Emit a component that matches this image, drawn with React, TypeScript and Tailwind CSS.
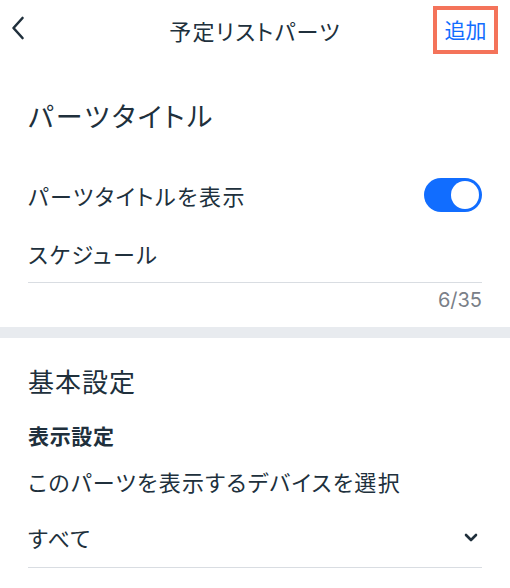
import React from "react";

const jp = {
  fontFamily: '"Noto Sans CJK JP", "Noto Sans", sans-serif',
  fontFeatureSettings: '"palt"',
} as React.CSSProperties;

export default function App() {
  return (
    <div className="w-[510px] h-[588px] bg-white text-[#20303c] overflow-hidden" style={jp}>
      {/* Header */}
      <div className="grid grid-cols-[1fr_auto_1fr] items-center h-[60px]">
        <div className="flex items-center pl-[11px] pb-[4px]">
          <svg width="14" height="24" viewBox="0 0 14 24" fill="none">
            <polyline points="11.5,2 2.5,12 11.5,22" stroke="#20303c" strokeWidth="2.6" strokeLinecap="round" strokeLinejoin="round" />
          </svg>
        </div>
        <div className="text-[22px] leading-[30px] tracking-[0.06em]">予定リストパーツ</div>
        <div className="flex justify-end pr-[12px]">
          <div className="w-[65px] h-[48px] border-[4px] border-[#f4735a] flex items-center justify-center text-[21px] text-[#116dff]">
            追加
          </div>
        </div>
      </div>

      {/* Section 1 */}
      <div className="px-[28px] pt-[20px]">
        <div className="h-[72px] flex items-center text-[27px] tracking-[0.09em]">パーツタイトル</div>
        <div className="h-[86px] flex items-center justify-between">
          <span className="text-[22px] tracking-[0.07em]">パーツタイトルを表示</span>
          <div className="w-[58px] h-[34px] rounded-full bg-[#116dff] flex items-center justify-end pr-[3px]">
            <div className="w-[28px] h-[28px] rounded-full bg-white" />
          </div>
        </div>
        <div className="h-[45px] border-b border-[#d9dde2]">
          <div className="text-[22px] leading-[30px] tracking-[0.07em]">スケジュール</div>
        </div>
        <div className="h-[34px] flex items-center justify-end text-[20px] text-[#7a8088]" style={{ fontFamily: 'Inter, "Liberation Sans", sans-serif' }}>
          6/35
        </div>
        <div className="h-[10px]" />
      </div>
      <div className="h-[11px] bg-[#e8ebef]" />

      {/* Section 2 */}
      <div className="px-[28px] pt-[20px]">
        <div className="h-[44px] flex items-center text-[26px] tracking-[0.04em]">基本設定</div>
        <div className="h-[68px] flex items-center text-[21px] font-bold tracking-[0.03em]">表示設定</div>
        <div className="h-[22px] flex items-center text-[22px] tracking-[0.06em]">このパーツを表示するデバイスを選択</div>
        <div className="mt-[22px] h-[54px] pb-[6px] border-b border-[#d9dde2] flex items-center justify-between">
          <span className="text-[22px] tracking-[0.05em]">すべて</span>
          <svg width="14" height="9" viewBox="0 0 14 9" fill="none" className="mr-[4px]">
            <polyline points="2,2 7,7 12,2" stroke="#20303c" strokeWidth="2.6" strokeLinecap="round" strokeLinejoin="round" />
          </svg>
        </div>
      </div>
    </div>
  );
}
